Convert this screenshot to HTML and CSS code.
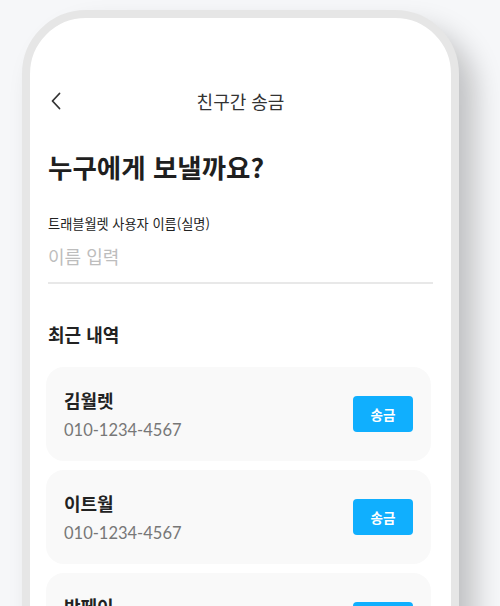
FILE: index.html
```html
<!DOCTYPE html>
<html lang="ko">
<head>
    <meta charset="UTF-8">
    <meta name="viewport" content="width=device-width, initial-scale=1.0">
    <title>친구간 송금</title>
    <link rel="stylesheet" href="styles.css">
</head>
<body>
    <div class="phone">
        <div class="screen">
            <div class="top-bar">
                <a href="#" class="back-button">
                    <svg width="12" height="18" viewBox="0 0 12 18">
                        <path d="M9.5 1.5 L2.5 9 L9.5 16.5" fill="none" stroke="#333" stroke-width="1.8" stroke-linecap="round" stroke-linejoin="round"/>
                    </svg>
                </a>
                <span class="top-title">친구간 송금</span>
            </div>

            <h1>누구에게 보낼까요?</h1>

            <label class="field-label" for="name">트래블월렛 사용자 이름(실명)</label>
            <input id="name" class="name-input" type="text" placeholder="이름 입력">

            <h2>최근 내역</h2>

            <div class="recent-list">
                <div class="recent-card">
                    <div class="recent-info">
                        <p class="recent-name">김월렛</p>
                        <p class="recent-phone">010-1234-4567</p>
                    </div>
                    <button class="send-button">송금</button>
                </div>
                <div class="recent-card">
                    <div class="recent-info">
                        <p class="recent-name">이트월</p>
                        <p class="recent-phone">010-1234-4567</p>
                    </div>
                    <button class="send-button">송금</button>
                </div>
                <div class="recent-card">
                    <div class="recent-info">
                        <p class="recent-name">박페이</p>
                        <p class="recent-phone">010-1234-4567</p>
                    </div>
                    <button class="send-button">송금</button>
                </div>
            </div>
        </div>
    </div>
</body>
</html>
```

FILE: styles.css
```css
body {
    font-family: "Noto Sans CJK KR", sans-serif;
    margin: 0;
    padding: 0;
    height: 606px;
    overflow: hidden;
    background-color: #f6f7f9;
    color: #222;
}

.phone {
    margin: 10px 0 0 22px;
    width: 421px;
    height: 760px;
    border: 8px solid #e6e6e6;
    border-radius: 64px;
    background-color: white;
    box-shadow: 16px 18px 28px rgba(0, 0, 0, 0.22);
}

.screen {
    padding: 61px 18px 0 18px;
}

.top-bar {
    position: relative;
    height: 44px;
    display: flex;
    align-items: center;
    justify-content: center;
}

.back-button {
    position: absolute;
    left: 2px;
    top: 13px;
    display: flex;
}

.top-title {
    font-size: 18px;
    color: #333;
}

h1 {
    margin: 26px 0 0 0;
    font-size: 26.5px;
    line-height: 36px;
    font-weight: bold;
    color: #1f1f1f;
}

.field-label {
    display: block;
    margin-top: 29px;
    font-size: 13.2px;
    line-height: 20px;
    color: #222;
}

.name-input {
    display: block;
    width: 100%;
    box-sizing: border-box;
    height: 48px;
    margin-top: 2px;
    padding: 6px 0 12px 0;
    border: none;
    border-bottom: 2px solid #e8e8e8;
    font-family: inherit;
    font-size: 18px;
    line-height: 28px;
    outline: none;
    background: transparent;
}

.name-input::placeholder {
    color: #bdbdbd;
}

h2 {
    margin: 37px 0 0 0;
    font-size: 18px;
    line-height: 27px;
    font-weight: bold;
    color: #222;
}

.recent-list {
    display: flex;
    flex-direction: column;
    gap: 9px;
    margin: 19px 2px 0 -2px;
}

.recent-card {
    display: flex;
    align-items: center;
    justify-content: space-between;
    padding: 20px 18px 17px 18px;
    border-radius: 18px;
    background-color: #f9f9f9;
}

.recent-name {
    margin: 0;
    font-size: 18px;
    line-height: 27px;
    font-weight: bold;
    color: #222;
}

.recent-phone {
    margin: 3px 0 0 0;
    font-family: Lato, sans-serif;
    font-size: 16.5px;
    line-height: 27px;
    color: #777;
}

.send-button {
    width: 60px;
    height: 36px;
    margin-top: -3px;
    border: none;
    border-radius: 4px;
    background-color: #10affe;
    color: white;
    font-family: inherit;
    font-size: 13.5px;
    font-weight: bold;
    cursor: pointer;
}
```
